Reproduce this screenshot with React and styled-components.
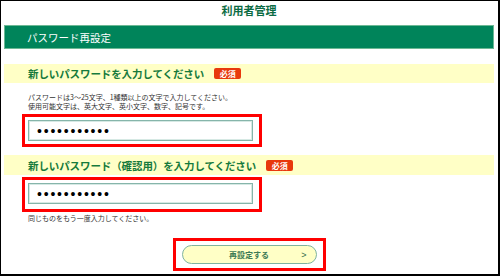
import React from "react";
import styled, { createGlobalStyle } from "styled-components";

const GlobalStyle = createGlobalStyle`
  html, body {
    margin: 0;
    padding: 0;
    background: #ffffff;
  }
  body {
    font-family: "Noto Sans CJK JP", "Noto Sans", sans-serif;
  }
`;

const Frame = styled.div`
  box-sizing: border-box;
  width: 500px;
  height: 276px;
  border-style: solid;
  border-color: #000;
  border-width: 1px 2px 2px 1px;
  padding: 0 4px 0 3px;
  display: flex;
  flex-direction: column;
  overflow: hidden;
`;

const PageTitle = styled.h1`
  margin: 0;
  height: 24px;
  display: flex;
  align-items: center;
  justify-content: center;
  padding-bottom: 6px;
  box-sizing: border-box;
  font-size: 11px;
  font-weight: 700;
  color: #0a6b43;
`;

const PanelBar = styled.div`
  box-sizing: border-box;
  height: 24px;
  background: #00845a;
  border: 1px solid #6cb894;
  display: flex;
  align-items: center;
  padding-left: 22px;
  font-size: 10.5px;
  color: #ffffff;
`;

const Section = styled.section`
  margin-top: ${(p) => p.$top}px;
  display: flex;
  flex-direction: column;
`;

const FieldHead = styled.div`
  box-sizing: border-box;
  height: ${(p) => p.$h || 19}px;
  background: #ffffc6;
  display: flex;
  align-items: center;
  gap: 10px;
  padding-left: 24px;
`;

const HeadText = styled.h2`
  margin: 0;
  font-size: 10.5px;
  font-weight: 700;
  color: #167a3c;
  letter-spacing: -0.1px;
`;

const Required = styled.span`
  display: inline-flex;
  align-items: center;
  justify-content: center;
  width: 27px;
  height: 11px;
  border-radius: 2px;
  background: #e8380d;
  color: #fff;
  font-size: 8px;
  font-weight: 700;
`;

const Help = styled.p`
  margin: ${(p) => p.$margin};
  padding-left: 24px;
  font-size: 7px;
  line-height: 9px;
  color: #333;
`;

const Highlight = styled.div`
  box-sizing: border-box;
  margin: ${(p) => p.$top || 0}px 0 0 18px;
  width: 240px;
  height: ${(p) => p.$h || 34}px;
  border: 3px solid #ff0000;
  padding: 3px 6px 0 3px;
`;

const PassInput = styled.input`
  box-sizing: border-box;
  display: block;
  width: 225px;
  height: 21px;
  border: 1px solid #86b5aa;
  box-shadow: inset 0 0 0 1px #d6e9e4;
  padding: 0 0 0 8px;
  font-family: "Liberation Sans", Arial, sans-serif;
  font-size: 14px;
  letter-spacing: 1.8px;
  color: #000;
  background: #fff;
  outline: none;
`;

const Footer = styled.div`
  margin-top: auto;
  margin-bottom: 3px;
  display: flex;
  justify-content: center;
`;

const ButtonFrame = styled.div`
  box-sizing: border-box;
  width: 153px;
  height: 33px;
  border: 3px solid #ff0000;
  display: flex;
  align-items: center;
  justify-content: center;
`;

const SubmitButton = styled.button`
  box-sizing: border-box;
  position: relative;
  width: 135px;
  height: 19px;
  border-radius: 10px;
  border: 1px solid #7fb39f;
  background: #ffffc6;
  font-family: inherit;
  font-size: 8px;
  font-weight: 700;
  color: #3e7b55;
  padding: 0;
  cursor: pointer;
  display: flex;
  align-items: center;
  justify-content: center;
`;

const Chevron = styled.span`
  position: absolute;
  right: 9px;
  top: 50%;
  transform: translateY(-50%);
  font-family: "Liberation Sans", Arial, sans-serif;
  font-size: 9px;
  font-weight: 400;
  color: #2f6b48;
`;

export default function App() {
  return (
    <>
      <GlobalStyle />
      <Frame>
        <PageTitle>利用者管理</PageTitle>
        <PanelBar>パスワード再設定</PanelBar>

        <Section $top={15}>
          <FieldHead>
            <HeadText>新しいパスワードを入力してください</HeadText>
            <Required>必須</Required>
          </FieldHead>
          <Help $margin="10px 0 0">
            パスワードは3～25文字、1種類以上の文字で入力してください。
            <br />
            使用可能文字は、英大文字、英小文字、数字、記号です。
          </Help>
          <Highlight $top={3} $h={33}>
            <PassInput type="password" defaultValue="passwordxyz" readOnly />
          </Highlight>
        </Section>

        <Section $top={8}>
          <FieldHead $h={20}>
            <HeadText>新しいパスワード（確認用）を入力してください</HeadText>
            <Required>必須</Required>
          </FieldHead>
          <Highlight $top={2} $h={35}>
            <PassInput type="password" defaultValue="passwordxyz" readOnly />
          </Highlight>
          <Help $margin="2px 0 0">同じものをもう一度入力してください。</Help>
        </Section>

        <Footer>
          <ButtonFrame>
            <SubmitButton type="button">
              再設定する
              <Chevron>&gt;</Chevron>
            </SubmitButton>
          </ButtonFrame>
        </Footer>
      </Frame>
    </>
  );
}
